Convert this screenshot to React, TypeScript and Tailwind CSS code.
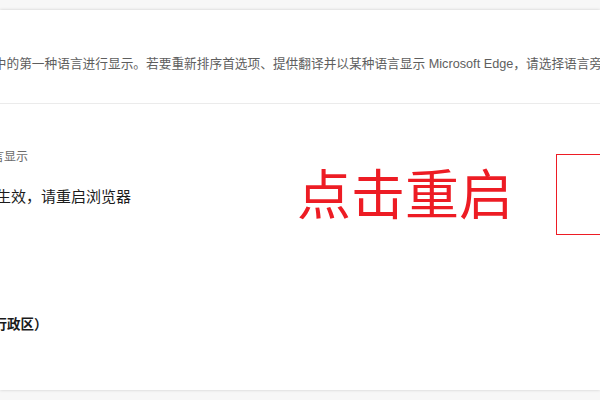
export default function App() {
  const font = { fontFamily: '"Liberation Sans", "Noto Sans CJK SC", sans-serif' };
  return (
    <main className="h-[400px] w-[600px] overflow-hidden bg-[#f7f7f7] pt-[10px]" style={font}>
      <div className="relative h-[380px] w-full overflow-hidden bg-white shadow-[0_0_3px_rgba(0,0,0,0.18)]">
        <section className="border-b border-[#ebebeb] pb-[29px] pt-[44px]">
          <p className="ml-[-95px] whitespace-nowrap text-[12.7px] leading-[20px] text-[#5e5e5e]">
            网站会以此列表中的第一种语言进行显示。若要重新排序首选项、提供翻译并以某种语言显示 Microsoft Edge，请选择语言旁边的“更多操作”。
          </p>
        </section>

        <section className="flex flex-col pt-[44px]">
          <p className="ml-[-44px] whitespace-nowrap text-[12px] leading-[18px] text-[#6b6b6b]">以此语言显示</p>
          <p className="ml-[-94px] mt-[20px] whitespace-nowrap text-[15px] leading-[22px] text-[#1b1b1b]">
            若要使此更改生效，请重启浏览器
          </p>
          <p className="ml-[-128px] mt-[107px] whitespace-nowrap text-[13.5px] font-bold leading-[20px] text-[#1b1b1b]">
            中文（中国香港特别行政区）
          </p>
        </section>

        {/* annotation */}
        <div className="absolute left-[297px] top-[159px] whitespace-nowrap text-[54px] leading-[54px] text-[#ed1c24]">
          点击重启
        </div>
        <div className="absolute left-[556px] top-[144px] h-[81px] w-[100px] border-[1.5px] border-[#ed1c24]" />
      </div>
    </main>
  );
}
